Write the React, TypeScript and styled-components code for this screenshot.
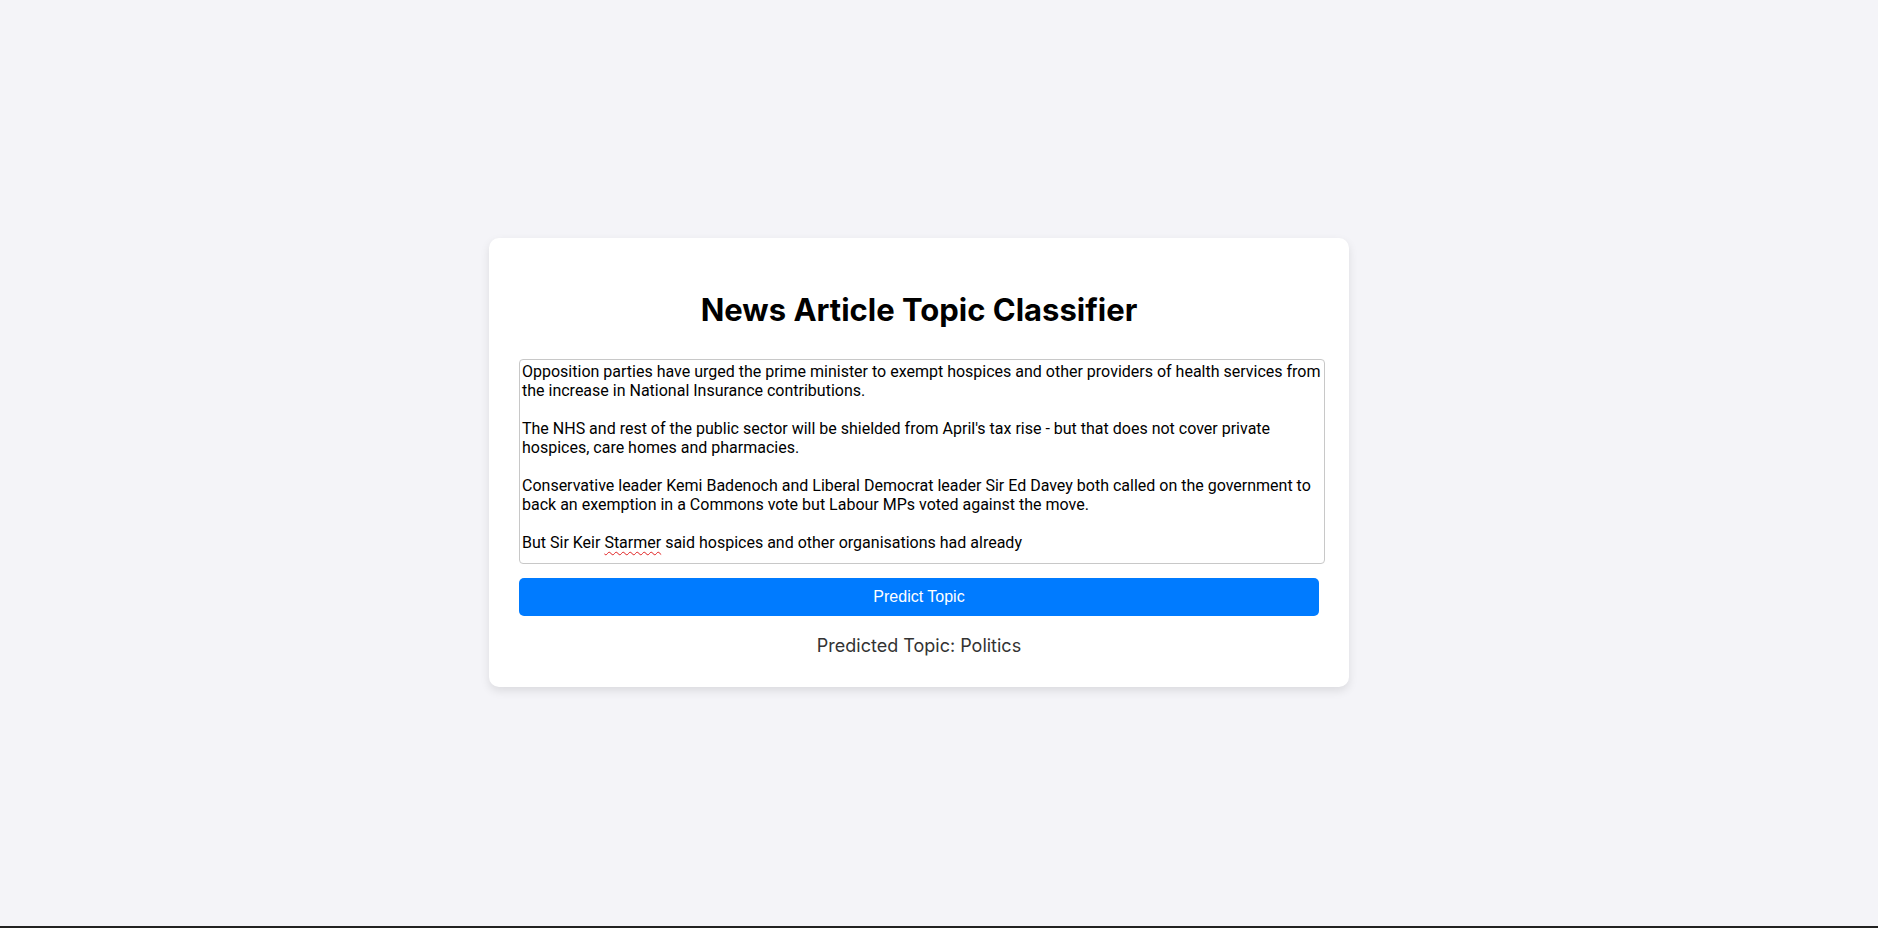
import React from "react";
import styled, { createGlobalStyle } from "styled-components";

const GlobalStyle = createGlobalStyle`
  html, body {
    margin: 0;
    padding: 0;
    background: #222222;
  }
  body {
    font-family: "Inter", "Liberation Sans", sans-serif;
  }
`;

const Page = styled.div`
  box-sizing: border-box;
  height: calc(100vh - 2px);
  background: #f4f4f8;
  display: flex;
  align-items: center;
  justify-content: center;
  padding-right: 40px;
  padding-bottom: 1px;
`;

const Card = styled.main`
  box-sizing: border-box;
  width: 860px;
  padding: 30px;
  background: #ffffff;
  border-radius: 10px;
  box-shadow: 0 4px 10px rgba(0, 0, 0, 0.1);
  display: flex;
  flex-direction: column;
  align-items: stretch;
`;

const Title = styled.h1`
  margin: 21.5px 0 30.5px;
  font-family: "Inter", sans-serif;
  font-weight: 700;
  font-size: 31px;
  line-height: 39px;
  color: #000000;
  text-align: center;
`;

const TextBox = styled.div`
  width: 800px;
  height: 199px;
  padding: 2px;
  border: 1px solid #c8c8c8;
  border-radius: 4px;
  font-family: "Roboto", "Liberation Sans", sans-serif;
  font-size: 16px;
  line-height: 19px;
  color: #000000;
  white-space: pre-wrap;
  overflow: hidden;
  background: #ffffff;
`;

const Misspelled = styled.span`
  text-decoration: underline wavy #e02020;
  text-decoration-thickness: 1px;
  text-underline-offset: 3px;
`;

const PredictButton = styled.button`
  margin-top: 14px;
  width: 800px;
  height: 38px;
  border: none;
  border-radius: 5px;
  background: #007bff;
  color: #ffffff;
  font-family: "Liberation Sans", Arial, sans-serif;
  font-size: 16px;
  cursor: pointer;
`;

const Result = styled.p`
  margin: 19px 0 0;
  font-family: "Inter", sans-serif;
  font-size: 18px;
  line-height: 22px;
  color: #333333;
  text-align: center;
`;

export default function App() {
  return (
    <>
      <GlobalStyle />
      <Page>
        <Card>
          <Title>News Article Topic Classifier</Title>
          <TextBox role="textbox" aria-multiline="true">
            {"Opposition parties have urged the prime minister to exempt hospices and other providers of health services from the increase in National Insurance contributions.\n\nThe NHS and rest of the public sector will be shielded from April's tax rise - but that does not cover private hospices, care homes and pharmacies.\n\nConservative leader Kemi Badenoch and Liberal Democrat leader Sir Ed Davey both called on the government to back an exemption in a Commons vote but Labour MPs voted against the move.\n\nBut Sir Keir "}
            <Misspelled>Starmer</Misspelled>
            {" said hospices and other organisations had already"}
          </TextBox>
          <PredictButton type="button">Predict Topic</PredictButton>
          <Result>Predicted Topic: Politics</Result>
        </Card>
      </Page>
    </>
  );
}
